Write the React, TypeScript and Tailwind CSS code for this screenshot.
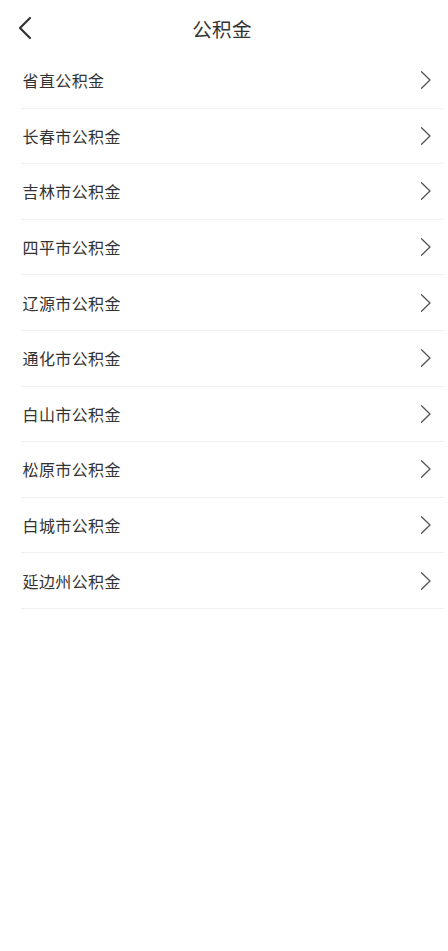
import React from 'react';

const cities = [
  '省直公积金',
  '长春市公积金',
  '吉林市公积金',
  '四平市公积金',
  '辽源市公积金',
  '通化市公积金',
  '白山市公积金',
  '松原市公积金',
  '白城市公积金',
  '延边州公积金',
];

const font = { fontFamily: '"Noto Sans CJK SC", "Noto Sans", sans-serif' };

export default function App() {
  return (
    <div className="w-[448px] h-[951px] bg-white text-[#333]" style={font}>
      {/* Header */}
      <header className="relative h-[53px] flex items-center justify-center pt-[5px] pr-[4px]">
        <button className="absolute left-[16px] top-[16px] w-[16px] h-[24px] flex items-center justify-center">
          <svg width="15" height="24" viewBox="0 0 15 24" fill="none">
            <path d="M13 2 L3 12 L13 22" stroke="#333" strokeWidth="2.2" strokeLinecap="round" strokeLinejoin="round" />
          </svg>
        </button>
        <h1 className="text-[19.5px] leading-none font-normal tracking-[0.3px]">公积金</h1>
      </header>

      {/* List */}
      <ul className="pl-[21px] pr-[4px]">
        {cities.map((name) => (
          <li key={name} className="h-[55.6px] flex items-center justify-between border-b border-[#f0f0f0]">
            <span className="text-[16px] leading-none pl-[1.5px] tracking-[0.4px]">{name}</span>
            <svg width="14" height="20" viewBox="0 0 14 20" fill="none" className="mr-[11px]">
              <path d="M2.5 1.8 L11 10 L2.5 18.2" stroke="#555" strokeWidth="1.3" strokeLinecap="round" strokeLinejoin="round" />
            </svg>
          </li>
        ))}
      </ul>
    </div>
  );
}
